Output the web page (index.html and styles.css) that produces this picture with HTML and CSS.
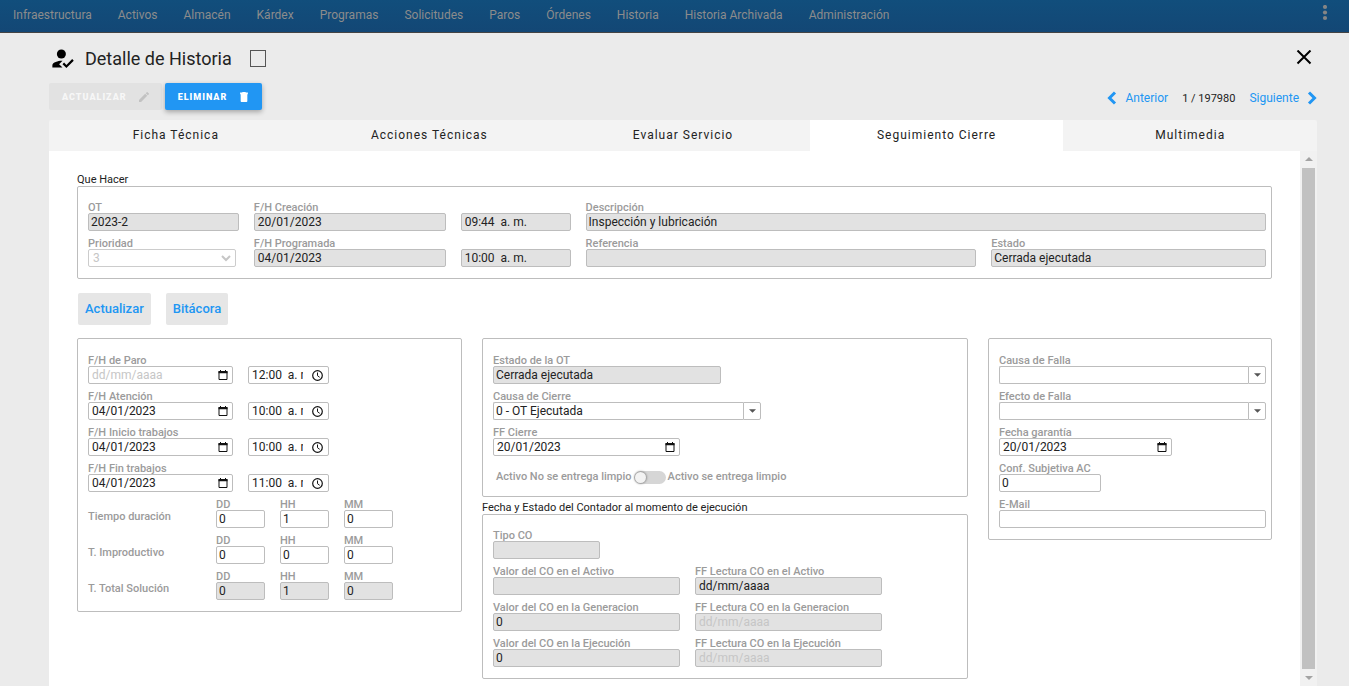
FILE: index.html
```
<!DOCTYPE html>
<html lang="es">
<head>
    <meta charset="UTF-8">
    <meta name="viewport" content="width=device-width, initial-scale=1.0">
    <title>Detalle de Historia</title>
    <link rel="stylesheet" href="styles.css">
</head>
<body>
    <!-- Iconos compartidos -->
    <svg class="sprite" aria-hidden="true">
        <symbol id="ico-fecha" viewBox="0 0 10 10">
            <path d="M1 1.5h8v8H1z" fill="none" stroke="currentColor"/>
            <path d="M.5 1h9v2.2h-9zM2 0h1v2H2zM7 0h1v2H7z" fill="currentColor"/>
        </symbol>
        <symbol id="ico-hora" viewBox="0 0 11 11">
            <circle cx="5.5" cy="5.5" r="4.8" fill="none" stroke="currentColor" stroke-width="1.2"/>
            <path d="M5.5 2.5v3.2l2.2 1.6" fill="none" stroke="currentColor"/>
        </symbol>
        <symbol id="ico-abajo" viewBox="0 0 8 4">
            <path d="M0 0h8L4 4z" fill="currentColor"/>
        </symbol>
    </svg>

    <nav class="navbar">
        <a href="#">Infraestructura</a>
        <a href="#">Activos</a>
        <a href="#">Almacén</a>
        <a href="#">Kárdex</a>
        <a href="#">Programas</a>
        <a href="#">Solicitudes</a>
        <a href="#">Paros</a>
        <a href="#">Órdenes</a>
        <a href="#">Historia</a>
        <a href="#">Historia Archivada</a>
        <a href="#">Administración</a>
        <button type="button" class="menu-btn" aria-label="Más opciones">
            <svg width="6" height="16" viewBox="0 0 6 16" fill="currentColor">
                <circle cx="3" cy="2" r="2.1"/><circle cx="3" cy="7.5" r="2.1"/><circle cx="3" cy="13" r="2.1"/>
            </svg>
        </button>
    </nav>

    <main class="modal">
        <header class="titulo">
            <svg width="27" height="27" viewBox="0 0 24 24">
                <path d="M9 17l3-2.94c-.39-.04-.68-.06-1-.06-2.67 0-8 1.34-8 4v2h9l-3-3z"/>
                <circle cx="11" cy="8" r="4"/>
                <path d="M15.47 20.5L12 17l1.4-1.41 2.07 2.08 5.13-5.17 1.4 1.41z"/>
            </svg>
            <h1>Detalle de Historia</h1>
            <input type="checkbox" class="check" aria-label="Seleccionar historia">
            <button type="button" class="cerrar" aria-label="Cerrar">
                <svg width="16" height="16" viewBox="0 0 16 16" fill="none" stroke="currentColor" stroke-width="2">
                    <path d="M1.5 .5l13 13M14.5 .5l-13 13"/>
                </svg>
            </button>
        </header>

        <div class="acciones">
            <button type="button" class="btn btn-off" disabled>Actualizar
                <svg width="10" height="10" viewBox="3 3 18 18" fill="currentColor">
                    <path d="M3 17.25V21h3.75L17.81 9.94l-3.75-3.75L3 17.25zM20.71 7.04a1 1 0 0 0 0-1.41l-2.34-2.34a1 1 0 0 0-1.41 0l-1.83 1.83 3.75 3.75 1.83-1.83z"/>
                </svg>
            </button>
            <button type="button" class="btn btn-azul">Eliminar
                <svg width="10" height="10" viewBox="3 3 18 18" fill="currentColor">
                    <path d="M6 19c0 1.1.9 2 2 2h8c1.1 0 2-.9 2-2V7H6v12zM19 4h-3.5l-1-1h-5l-1 1H5v3h14V4z"/>
                </svg>
            </button>
            <div class="paginador">
                <a href="#" class="pag">
                    <svg width="10" height="14" viewBox="0 0 10 14"><path d="M8 1.5L2.5 7 8 12.5"/></svg>
                    Anterior
                </a>
                <span>1 / 197980</span>
                <a href="#" class="pag">
                    Siguiente
                    <svg width="10" height="14" viewBox="0 0 10 14"><path d="M2 1.5L7.5 7 2 12.5"/></svg>
                </a>
            </div>
        </div>

        <div class="tabs" role="tablist">
            <button type="button" role="tab">Ficha Técnica</button>
            <button type="button" role="tab">Acciones Técnicas</button>
            <button type="button" role="tab">Evaluar Servicio</button>
            <button type="button" role="tab" class="activo" aria-selected="true">Seguimiento Cierre</button>
            <button type="button" role="tab">Multimedia</button>
        </div>

        <div class="panel">
            <form class="contenido">
                <h2>Que Hacer</h2>
                <section class="caja caja-titulada que-hacer">
                    <div class="campo"><label for="ot">OT</label><input id="ot" type="text" value="2023-2" readonly></div>
                    <div class="campo"><label for="fcrea">F/H Creación</label><input id="fcrea" class="fecha" type="text" value="20/01/2023" readonly></div>
                    <div class="campo"><input class="fecha" type="text" value="09:44  a. m." aria-label="Hora creación" readonly></div>
                    <div class="campo doble"><label for="desc">Descripción</label><input id="desc" type="text" value="Inspección y lubricación" readonly></div>
                    <div class="campo">
                        <label for="prio">Prioridad</label>
                        <div class="lista">
                            <select id="prio" disabled><option>3</option></select>
                            <svg width="10" height="7" viewBox="0 0 10 7"><path d="M1 1l4 4 4-4"/></svg>
                        </div>
                    </div>
                    <div class="campo"><label for="fprog">F/H Programada</label><input id="fprog" class="fecha" type="text" value="04/01/2023" readonly></div>
                    <div class="campo"><input class="fecha" type="text" value="10:00  a. m." aria-label="Hora programada" readonly></div>
                    <div class="campo"><label for="ref">Referencia</label><input id="ref" type="text" readonly></div>
                    <div class="campo"><label for="estado">Estado</label><input id="estado" type="text" value="Cerrada ejecutada" readonly></div>
                </section>

                <div class="botones">
                    <button type="button">Actualizar</button>
                    <button type="button">Bitácora</button>
                </div>

                <div class="columnas">
                    <section class="caja">
                        <div class="fila">
                            <div class="campo w-fecha"><label for="paro">F/H de Paro</label>
                                <div class="con-icono"><input id="paro" class="fecha" type="text" placeholder="dd/mm/aaaa"><svg><use href="#ico-fecha"/></svg></div></div>
                            <div class="campo w-hora"><div class="con-icono hora"><input class="fecha" type="text" value="12:00  a. m." aria-label="Hora de paro"><svg><use href="#ico-hora"/></svg></div></div>
                        </div>
                        <div class="fila">
                            <div class="campo w-fecha"><label for="aten">F/H Atención</label>
                                <div class="con-icono"><input id="aten" class="fecha" type="text" value="04/01/2023"><svg><use href="#ico-fecha"/></svg></div></div>
                            <div class="campo w-hora"><div class="con-icono hora"><input class="fecha" type="text" value="10:00  a. m." aria-label="Hora de atención"><svg><use href="#ico-hora"/></svg></div></div>
                        </div>
                        <div class="fila">
                            <div class="campo w-fecha"><label for="ini">F/H Inicio trabajos</label>
                                <div class="con-icono"><input id="ini" class="fecha" type="text" value="04/01/2023"><svg><use href="#ico-fecha"/></svg></div></div>
                            <div class="campo w-hora"><div class="con-icono hora"><input class="fecha" type="text" value="10:00  a. m." aria-label="Hora de inicio"><svg><use href="#ico-hora"/></svg></div></div>
                        </div>
                        <div class="fila">
                            <div class="campo w-fecha"><label for="fin">F/H Fin trabajos</label>
                                <div class="con-icono"><input id="fin" class="fecha" type="text" value="04/01/2023"><svg><use href="#ico-fecha"/></svg></div></div>
                            <div class="campo w-hora"><div class="con-icono hora"><input class="fecha" type="text" value="11:00  a. m." aria-label="Hora de fin"><svg><use href="#ico-hora"/></svg></div></div>
                        </div>
                        <div class="fila tiempo">
                            <span>Tiempo duración</span>
                            <div class="campo"><label for="d1">DD</label><input id="d1" type="text" value="0"></div>
                            <div class="campo"><label for="h1">HH</label><input id="h1" type="text" value="1"></div>
                            <div class="campo"><label for="m1">MM</label><input id="m1" type="text" value="0"></div>
                        </div>
                        <div class="fila tiempo">
                            <span>T. Improductivo</span>
                            <div class="campo"><label for="d2">DD</label><input id="d2" type="text" value="0"></div>
                            <div class="campo"><label for="h2">HH</label><input id="h2" type="text" value="0"></div>
                            <div class="campo"><label for="m2">MM</label><input id="m2" type="text" value="0"></div>
                        </div>
                        <div class="fila tiempo">
                            <span>T. Total Solución</span>
                            <div class="campo"><label for="d3">DD</label><input id="d3" type="text" value="0" readonly></div>
                            <div class="campo"><label for="h3">HH</label><input id="h3" type="text" value="1" readonly></div>
                            <div class="campo"><label for="m3">MM</label><input id="m3" type="text" value="0" readonly></div>
                        </div>
                    </section>

                    <div class="centro">
                        <section class="caja">
                            <div class="campo w-estado"><label for="estot">Estado de la OT</label><input id="estot" type="text" value="Cerrada ejecutada" readonly></div>
                            <div class="campo w-causa"><label for="causa">Causa de Cierre</label>
                                <div class="combo"><input id="causa" type="text" value="0 - OT Ejecutada"><button type="button" aria-label="Ver causas de cierre"><svg><use href="#ico-abajo"/></svg></button></div></div>
                            <div class="campo w-medio"><label for="ffc">FF Cierre</label>
                                <div class="con-icono"><input id="ffc" class="fecha" type="text" value="20/01/2023"><svg><use href="#ico-fecha"/></svg></div></div>
                            <label class="limpio">
                                Activo No se entrega limpio
                                <input type="checkbox" class="switch">
                                Activo se entrega limpio
                            </label>
                        </section>

                        <h2>Fecha y Estado del Contador al momento de ejecución</h2>
                        <section class="caja caja-titulada">
                            <div class="campo w-tipo"><label for="tipo">Tipo CO</label><input id="tipo" type="text" readonly></div>
                            <div class="fila">
                                <div class="campo w-medio"><label for="va">Valor del CO en el Activo</label><input id="va" type="text" readonly></div>
                                <div class="campo w-medio"><label for="fa">FF Lectura CO en el Activo</label><input id="fa" class="fecha" type="text" value="dd/mm/aaaa" readonly></div>
                            </div>
                            <div class="fila">
                                <div class="campo w-medio"><label for="vg">Valor del CO en la Generacion</label><input id="vg" type="text" value="0" readonly></div>
                                <div class="campo w-medio"><label for="fg">FF Lectura CO en la Generacion</label><input id="fg" class="fecha" type="text" placeholder="dd/mm/aaaa" readonly></div>
                            </div>
                            <div class="fila">
                                <div class="campo w-medio"><label for="ve">Valor del CO en la Ejecución</label><input id="ve" type="text" value="0" readonly></div>
                                <div class="campo w-medio"><label for="fe">FF Lectura CO en la Ejecución</label><input id="fe" class="fecha" type="text" placeholder="dd/mm/aaaa" readonly></div>
                            </div>
                        </section>
                    </div>

                    <section class="caja">
                        <div class="campo"><label for="cfalla">Causa de Falla</label>
                            <div class="combo"><input id="cfalla" type="text"><button type="button" aria-label="Ver causas de falla"><svg><use href="#ico-abajo"/></svg></button></div></div>
                        <div class="campo"><label for="efalla">Efecto de Falla</label>
                            <div class="combo"><input id="efalla" type="text"><button type="button" aria-label="Ver efectos de falla"><svg><use href="#ico-abajo"/></svg></button></div></div>
                        <div class="campo w-garantia"><label for="gar">Fecha garantía</label>
                            <div class="con-icono"><input id="gar" class="fecha" type="text" value="20/01/2023"><svg><use href="#ico-fecha"/></svg></div></div>
                        <div class="campo w-conf"><label for="conf">Conf. Subjetiva AC</label><input id="conf" type="text" value="0"></div>
                        <div class="campo"><label for="mail">E-Mail</label><input id="mail" type="email"></div>
                    </section>
                </div>
            </form>

            <div class="scroll" aria-hidden="true">
                <svg class="arriba"><use href="#ico-abajo"/></svg>
                <div class="thumb"></div>
                <svg><use href="#ico-abajo"/></svg>
            </div>
        </div>
    </main>
</body>
</html>
```
FILE: styles.css
```
* {
    box-sizing: border-box;
}

body {
    margin: 0;
    height: 100vh;
    display: flex;
    flex-direction: column;
    overflow: hidden;
    background: #ebebeb;
    color: #222;
    font-family: Roboto, "Liberation Sans", sans-serif;
    font-size: 12px;
}

button, input, select {
    font-family: inherit;
    color: inherit;
}

button {
    cursor: pointer;
}

.sprite {
    display: none;
}

/* Barra superior */
.navbar {
    display: flex;
    align-items: center;
    gap: 26px;
    height: 33px;
    padding: 0 21px 2px 13px;
    background: linear-gradient(#114e7c, #134775);
    border-bottom: 1px solid #444;
}

.navbar a {
    color: #8c8c8c;
    text-decoration: none;
    white-space: nowrap;
}

.menu-btn {
    display: flex;
    margin: 0 0 4px auto;
    padding: 0;
    border: none;
    background: none;
    color: #858585;
}

.modal {
    flex: 1;
    min-height: 0;
    display: flex;
    flex-direction: column;
    padding: 0 32px 0 49px;
}

.titulo {
    display: flex;
    align-items: center;
    height: 50px;
}

.titulo h1 {
    margin: 0 18px 0 9px;
    font-size: 18px;
    font-weight: 400;
    color: #222;
}

.check {
    appearance: none;
    width: 16px;
    height: 17px;
    margin: 0;
    border: 1px solid #555;
}

.cerrar {
    display: flex;
    margin: 0 5px 0 auto;
    padding: 0;
    border: none;
    background: none;
    color: #000;
}

/* Botones y paginador */
.acciones {
    display: flex;
    gap: 3px;
    height: 27px;
    margin-bottom: 10px;
}

.btn {
    display: flex;
    align-items: center;
    gap: 12px;
    padding: 0 13px;
    border: none;
    border-radius: 2px;
    font-size: 9px;
    font-weight: 900;
    letter-spacing: 1px;
    text-transform: uppercase;
}

.btn-off {
    background: #e2e2e2;
    color: #f7f7f7;
}

.btn-off svg {
    color: #c2c2c2;
}

.btn-azul {
    background: #2196f3;
    color: #fff;
    box-shadow: 0 2px 5px rgba(0, 0, 0, 0.3);
}

.paginador {
    display: flex;
    align-items: center;
    gap: 14px;
    margin-left: auto;
    padding-top: 3px;
    font-size: 11px;
}

.pag {
    display: flex;
    align-items: center;
    gap: 8px;
    color: #2196f3;
    font-size: 12px;
    text-decoration: none;
}

.pag svg {
    fill: none;
    stroke: currentColor;
    stroke-width: 3;
}

/* Pestañas */
.tabs {
    display: grid;
    grid-template-columns: repeat(5, 1fr);
    height: 31px;
    background: #f3f3f3;
    border-radius: 2px 2px 0 0;
}

.tabs button {
    padding: 0 0 2px;
    border: none;
    background: none;
    font-size: 12px;
    letter-spacing: 1px;
}

.tabs .activo {
    background: #fff;
}

.panel {
    flex: 1;
    min-height: 0;
    display: flex;
    background: #fff;
}

.contenido {
    flex: 1;
    min-width: 0;
    overflow: hidden;
    padding: 21px 28px 0;
}

.contenido h2 {
    margin: 0;
    height: 14px;
    font-size: 11px;
    font-weight: 400;
    line-height: 16px;
}

.caja {
    display: flex;
    flex-direction: column;
    gap: 6px;
    padding: 15px 5px 11px 10px;
    border: 1px solid #bdbdbd;
    border-radius: 2px;
}

.caja-titulada {
    padding-top: 14px;
}

.que-hacer {
    display: grid;
    grid-template-columns: 151fr 192fr 110fr 391fr 275fr;
    gap: 6px 15px;
}

.doble {
    grid-column: span 2;
}

/* Campos */
.campo {
    display: flex;
    flex-direction: column;
    justify-content: flex-end;
    min-width: 0;
}

.campo label,
.tiempo span,
.limpio {
    color: #9b9b9b;
    font-size: 11px;
    font-weight: 500;
    line-height: 14px;
    white-space: nowrap;
}

.campo label {
    height: 12px;
}

.campo input,
.campo select {
    width: 100%;
    height: 18px;
    margin: 0;
    padding: 0 2px;
    border: 1px solid #bdbdbd;
    border-radius: 2px;
    background: #fff;
    font-size: 12px;
    outline: none;
}

.campo input[readonly] {
    background: #e2e2e2;
}

.campo .fecha {
    padding-left: 3px;
}

.campo input::placeholder {
    color: #c6c6c6;
    opacity: 1;
}

.lista,
.con-icono {
    display: grid;
    align-items: center;
}

.lista > *,
.con-icono > * {
    grid-area: 1 / 1;
}

.lista {
    margin-right: 3px;
}

.lista select {
    appearance: none;
    padding-left: 4px;
    border-color: #ccc;
    color: #c6c6c6;
    opacity: 1;
}

.lista svg {
    justify-self: end;
    margin-right: 5px;
    fill: none;
    stroke: #c6c6c6;
    stroke-width: 2;
}

.con-icono svg {
    justify-self: end;
    width: 10px;
    height: 10px;
    margin-right: 5px;
    color: #111;
}

.con-icono .fecha {
    padding-right: 25px;
}

.con-icono.hora svg {
    width: 11px;
    height: 11px;
    margin-right: 6px;
}

.combo {
    display: flex;
}

.combo input {
    border-radius: 2px 0 0 2px;
    border-right: none;
}

.combo button {
    display: flex;
    align-items: center;
    justify-content: center;
    flex: 0 0 18px;
    height: 18px;
    padding: 0;
    border: 1px solid #bdbdbd;
    border-radius: 0 2px 2px 0;
    background: #fff;
    color: #555;
}

.combo svg {
    width: 7px;
    height: 4px;
}

.botones {
    display: flex;
    gap: 15px;
    margin: 14px 1px 13px;
}

.botones button {
    height: 32px;
    padding: 0 7px 2px;
    border: none;
    border-radius: 2px;
    background: #e6e6e6;
    color: #2196f3;
    font-size: 13px;
    font-weight: 500;
}

.columnas {
    display: grid;
    grid-template-columns: 385fr 486fr 284fr;
    align-items: start;
    gap: 20px;
}

.fila {
    display: flex;
    gap: 15px;
}

.tiempo span {
    flex: 0 0 113px;
    align-self: flex-end;
    padding-bottom: 4px;
}

.tiempo .campo {
    width: 49px;
}

.w-fecha { width: 145px; }
.w-hora { width: 81px; }
.w-estado { width: 228px; }
.w-causa { width: 268px; }
.w-medio { width: 187px; }
.w-tipo { width: 107px; }
.w-garantia { width: 173px; }
.w-conf { width: 102px; }

.limpio {
    display: flex;
    align-items: center;
    gap: 2px;
    padding: 8px 3px 1px;
}

.switch {
    appearance: none;
    display: flex;
    align-items: center;
    width: 32px;
    height: 13px;
    margin: 0;
    border-radius: 7px;
    background: #d6d6d6;
}

.switch::before {
    content: "";
    width: 11px;
    height: 11px;
    margin-left: 1px;
    border-radius: 50%;
    background: #f3f3f3;
    box-shadow: 0 0 2px 1px rgba(0, 0, 0, 0.3);
}

.centro h2 {
    height: 17px;
    line-height: 22px;
}

/* Barra de desplazamiento */
.scroll {
    display: flex;
    flex-direction: column;
    align-items: center;
    gap: 7px;
    width: 17px;
    padding: 6px 0;
    background: #f1f1f1;
}

.scroll svg {
    width: 8px;
    height: 4px;
    color: #a3a3a3;
}

.scroll .arriba {
    transform: rotate(180deg);
}

.thumb {
    flex: 1;
    width: 13px;
    background: #c1c1c1;
}
```
